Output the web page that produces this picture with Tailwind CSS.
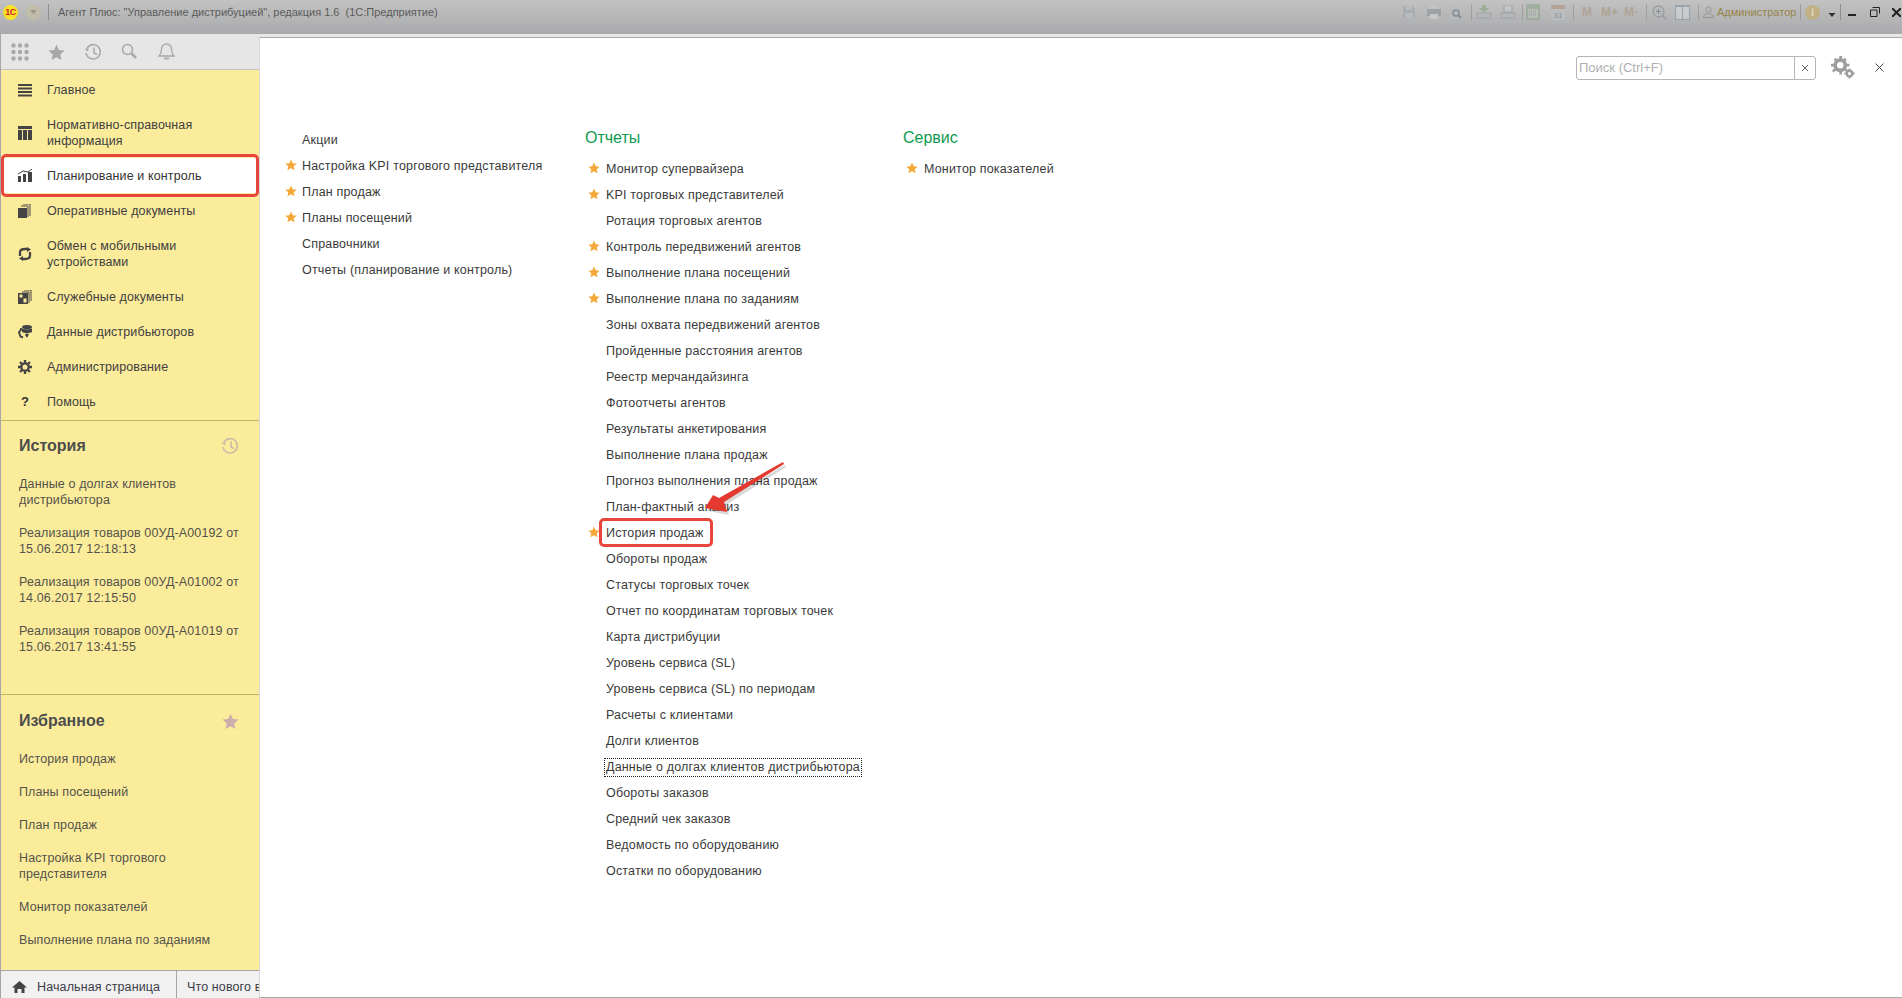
<!DOCTYPE html>
<html lang="ru">
<head>
<meta charset="utf-8">
<title>Агент Плюс</title>
<script src="https://cdn.jsdelivr.net/npm/@tailwindcss/browser@4"></script>
</head>
<body class="relative w-[1902px] h-[998px] overflow-hidden bg-white font-['Liberation_Sans',Arial,sans-serif] text-[13px] text-[#333]">

<!-- title bar -->
<header class="h-[34px] pb-[10px] flex items-center bg-gradient-to-b from-[#c2c2c2] to-[#a9aaac] text-[#5b5b5b]">
  <div class="w-[15px] h-[15px] ml-[3px] rounded-full bg-[#f7e02a] text-[#d6262a] text-[9px] tracking-[-0.5px] leading-[15px] font-bold text-center shrink-0">1С</div>
  <div class="w-[15px] h-[15px] ml-[8px] rounded-full bg-[#c2bdaa] flex items-center justify-center shrink-0"><svg width="7" height="4" viewBox="0 0 8 5"><path d="M0 0h8L4 5z" fill="#9a9484"/></svg></div>
  <div class="w-px h-[16px] ml-[7px] bg-[#8f8f8f]"></div>
  <div class="ml-[9px] text-[11px] whitespace-pre">Агент Плюс: "Управление дистрибуцией", редакция 1.6  (1С:Предприятие)</div>
  <div class="ml-auto flex items-center h-full pr-[1px]">
    <div class="flex items-center h-full opacity-60">
    <svg class="w-[14px] h-[14px] mr-[10px]" viewBox="0 0 14 14"><path d="M1 1h10l2 2v10H1z" fill="#9aa7b0"/><path d="M4 1h6v4H4zM3 8h8v5H3z" fill="#b9bdbf"/></svg>
    <svg class="w-[16px] h-[14px] mr-[7px]" viewBox="0 0 16 14"><path d="M4 0h8v4H4z" fill="#c8c8c8"/><path d="M1 4h14v7H1z" fill="#8b9398"/><path d="M4 9h8v5H4z" fill="#d4d4d4"/></svg>
    <svg class="w-[14px] h-[15px] mr-[8px]" viewBox="0 0 14 15"><path d="M1 0h8l3 3v11H1z" fill="#b7bec2"/><circle cx="7" cy="8" r="3" fill="none" stroke="#62707a" stroke-width="1.5"/><path d="M9 10l3 3" stroke="#62707a" stroke-width="2"/></svg>
    <div class="w-px h-[16px] mr-[4px] bg-[#8f8f8f]"></div>
    <svg class="w-[16px] h-[14px] mr-[8px]" viewBox="0 0 16 14"><path d="M6 0h4v3h3l-5 4-5-4h3z" fill="#88a37c"/><path d="M1 8h14v5H1z" fill="#b4babd" stroke="#8c9498"/></svg>
    <svg class="w-[16px] h-[14px] mr-[6px]" viewBox="0 0 16 14"><path d="M4 0h8v7H4z" fill="#c6c9ca" stroke="#8c9498"/><path d="M1 8h14v5H1z" fill="#b4babd" stroke="#8c9498"/></svg>
    <div class="w-px h-[16px] mr-[3px] bg-[#8f8f8f]"></div>
    <svg class="w-[14px] h-[16px] mr-[11px]" viewBox="0 0 14 16"><path d="M0 0h14v16H0z" fill="#8da58a"/><path d="M2 5h10v9H2z" fill="#bcc2bb"/><path d="M3 7h8M3 9h8M3 11h8" stroke="#80878a" stroke-dasharray="1 1"/></svg>
    <svg class="w-[14px] h-[16px] mr-[8px]" viewBox="0 0 14 16"><path d="M0 1h14v15H0z" fill="#bdc2c5"/><path d="M0 1h14v4H0z" fill="#b2907c"/><text x="2.5" y="14" font-size="8" fill="#6f777c" font-family="Liberation Sans">31</text></svg>
    <div class="w-px h-[16px] mr-[6px] bg-[#8f8f8f]"></div>
    <div class="flex text-[#a8967f] text-[12px] font-bold w-[66px] pl-[2px]"><span class="w-[19px]">M</span><span class="w-[23px]">M+</span><span>M-</span></div>
    <div class="w-px h-[16px] mr-[5px] bg-[#8f8f8f]"></div>
    <svg class="w-[15px] h-[15px] mr-[8px]" viewBox="0 0 15 15"><circle cx="6.5" cy="6.5" r="5.5" fill="#b5bbbe" stroke="#828a8e" stroke-width="1.3"/><path d="M4 6.5h5M6.500 4v5" stroke="#707070"/><path d="M10.500 10.500l4 4" stroke="#828a8e" stroke-width="1.5"/></svg>
    <svg class="w-[15px] h-[15px] mr-[8px]" viewBox="0 0 15 15"><path d="M0 0h15v15H0z" fill="#7f95a3"/><path d="M1 2h6v12H1zM8 2h6v12H8z" fill="#d5d7d8"/></svg>
    <div class="w-px h-[16px] mr-[4px] bg-[#8f8f8f]"></div>
    <svg class="w-[11px] h-[12px] mr-[3px]" viewBox="0 0 11 12"><circle cx="5.5" cy="3.5" r="2.6" fill="none" stroke="#85807a"/><path d="M.5 11.500c0-3 2-4 5-4s5 1 5 4z" fill="none" stroke="#85807a"/></svg>
    </div>
    <div class="text-[11px] text-[#97844a] w-[78px] mr-[5px] whitespace-nowrap">Администратор</div>
    <div class="w-px h-[16px] mr-[4px] bg-[#9a9a9a]"></div>
    <div class="w-[15px] h-[15px] rounded-full bg-[#c0b085] text-[#e0d8bc] text-[11px] leading-[15px] font-bold text-center mr-[8px]">i</div>
    <svg class="w-[8px] h-[4px] mr-[4px] mt-[6px]" viewBox="0 0 7 4"><path d="M0 0h7L3.500 4z" fill="#333"/></svg>
    <div class="w-px h-[16px] mr-[7px] bg-[#8f8f8f]"></div>
    <div class="w-[8px] h-[2px] bg-[#222] mr-[14px] mt-[5px]"></div>
    <svg class="w-[10px] h-[10px] mr-[12px]" viewBox="0 0 10 10"><path d="M2.500.5h7v6M.5 3h6.500v6.500H.5z" fill="none" stroke="#222"/></svg>
    <svg class="w-[9px] h-[9px]" viewBox="0 0 9 9"><path d="M0 0l9 9M9 0l-9 9" stroke="#222" stroke-width="2"/></svg>
  </div>
</header>

<div class="h-[964px] flex bg-[#e8e8e8]">
  <!-- sidebar -->
  <aside class="w-[259px] shrink-0 flex flex-col border-l border-[#a6a6a6]">
    <div class="h-[36px] pt-[8px] flex items-start bg-[#e6e6e6] border-b border-[#c2c2c2] shrink-0">
      <svg class="w-[18px] h-[18px] ml-[10px] mt-[1px]" viewBox="0 0 18 18" fill="#a8a8a8"><circle cx="2.500" cy="2.500" r="2.200"/><circle cx="9" cy="2.500" r="2.200"/><circle cx="15.500" cy="2.500" r="2.200"/><circle cx="2.500" cy="9" r="2.200"/><circle cx="9" cy="9" r="2.200"/><circle cx="15.500" cy="9" r="2.200"/><circle cx="2.500" cy="15.500" r="2.200"/><circle cx="9" cy="15.500" r="2.200"/><circle cx="15.500" cy="15.500" r="2.200"/></svg>
      <svg class="w-[17px] h-[17px] ml-[19px] mt-[2px]" viewBox="0 0 24 24" fill="#a8a8a8"><path d="M12 1l3.400 7.400 8 .9-6 5.400 1.700 8L12 18.600 4.900 22.700l1.700-8-6-5.400 8-.9z"/></svg>
      <svg class="w-[18px] h-[18px] ml-[19px] mt-[1px]" viewBox="0 0 18 18" fill="none" stroke="#a8a8a8" stroke-width="1.500"><path d="M3 5a7.200 7.200 0 1 1-1 5"/><path d="M.5 5.500h4.500l-1.500 3z" fill="#a8a8a8" stroke="none"/><path d="M10 4.500V10l3 1.500"/></svg>
      <svg class="w-[16px] h-[17px] ml-[19px] mt-[1px]" viewBox="0 0 16 17" fill="none" stroke="#a8a8a8"><circle cx="6.500" cy="6.500" r="5" stroke-width="1.500"/><path d="M10.500 10.500l4.500 4.500" stroke-width="2.500"/></svg>
      <svg class="w-[17px] h-[18px] ml-[21px]" viewBox="0 0 17 18" fill="none" stroke="#a8a8a8" stroke-width="1.300"><path d="M1 14h15c-2-2-2.500-4-2.500-7a5 5 0 0 0-10 0c0 3-.5 5-2.500 7z"/><path d="M6 16.500h5" stroke-width="1.800"/></svg>
    </div>

    <div class="flex-1 min-h-0 bg-[#fbec9c] flex flex-col text-[#404040]">
      <nav class="pt-[2px] border-b border-[#c0b26a] pb-[1px] shrink-0 tracking-[0.12px] leading-[16px] text-[12.500px]">
        <div class="h-[35px] flex items-center gap-[15px] pl-[17px]">
          <svg class="w-[14px] h-[14px] shrink-0" viewBox="0 0 14 14" fill="#444"><path d="M0 1h14v2H0zM0 4.500h14v2H0zM0 8h14v2H0zM0 11.500h14v2H0z"/></svg><span>Главное</span>
        </div>
        <div class="h-[51px] flex items-center gap-[15px] pl-[17px]">
          <svg class="w-[14px] h-[14px] shrink-0" viewBox="0 0 14 14" fill="#444"><path d="M0 0h14v3H0zM0 4h4v10H0zM5 4h4v10H5zM10 4h4v10h-4z"/></svg><span>Нормативно-справочная<br>информация</span>
        </div>
        <div class="h-[35px] flex items-center gap-[15px] pl-[17px] bg-white">
          <svg class="w-[14px] h-[14px] shrink-0" viewBox="0 0 14 14" fill="#444"><path d="M0 7h3v6H0zM5 5h3v8H5zM10 3h4v10h-4z"/><path d="M0 5l5-3 5 1 4-3" fill="none" stroke="#444"/></svg><span class="text-[#333]">Планирование и контроль</span>
        </div>
        <div class="h-[35px] flex items-center gap-[15px] pl-[17px]">
          <svg class="w-[14px] h-[14px] shrink-0" viewBox="0 0 14 14" fill="#444"><path d="M0 4h9v10H0z"/><path d="M10 13V2H3M12 12V0H5" fill="none" stroke="#444"/></svg><span>Оперативные документы</span>
        </div>
        <div class="h-[51px] flex items-center gap-[15px] pl-[17px]">
          <svg class="w-[14px] h-[14px] shrink-0" viewBox="0 0 14 14" fill="none" stroke="#444" stroke-width="2.300"><path d="M2 9V5.500C2 3 4 2 7 2h3"/><path d="M12 5v3.500C12 11 10 12 7 12H4"/><path d="M9 0l4 2.500L9 5zM5 9v5L1 11.500z" fill="#444" stroke="none"/></svg><span>Обмен с мобильными<br>устройствами</span>
        </div>
        <div class="h-[35px] flex items-center gap-[15px] pl-[17px]">
          <svg class="w-[14px] h-[14px] shrink-0" viewBox="0 0 14 14" fill="#444"><path d="M0 3h10v11H0z"/><path d="M1.500 4.500h3v3h-3zM5.500 8.500h3v4h-3z" fill="#fbec9c"/><path d="M11 13V2H4M13 11V0H6" fill="none" stroke="#444"/></svg><span>Служебные документы</span>
        </div>
        <div class="h-[35px] flex items-center gap-[15px] pl-[16px]">
          <svg class="w-[15px] h-[14px] shrink-0" viewBox="0 0 15 14" fill="#444"><ellipse cx="10" cy="2" rx="5" ry="2"/><path d="M5 3.500c2 1 8 1 10 0V7c-2 1.500-8 1.500-10 0z"/><path d="M9 8.500l3 .5-2 4-2-3z"/><path d="M4 3v1.500l-2 3 1.500 4 2.500 1" fill="none" stroke="#444" stroke-width="2"/></svg><span>Данные дистрибьюторов</span>
        </div>
        <div class="h-[35px] flex items-center gap-[15px] pl-[17px]">
          <svg class="w-[14px] h-[14px] shrink-0" viewBox="0 0 14 14"><circle cx="7" cy="7" r="3.700" fill="none" stroke="#444" stroke-width="2.300"/><path d="M7 0v3M7 11v3M0 7h3M11 7h3M2 2l2 2M10 10l2 2M12 2l-2 2M4 10l-2 2" stroke="#444" stroke-width="2.300"/></svg><span>Администрирование</span>
        </div>
        <div class="h-[35px] flex items-center gap-[15px] pl-[17px]">
          <span class="w-[14px] shrink-0 text-center font-bold text-[13px] text-[#333]">?</span><span>Помощь</span>
        </div>
      </nav>

      <section class="h-[274px] shrink-0 border-b border-[#c0b26a] pl-[18px] pr-[14px] pt-[13px] tracking-[0.12px] text-[#54524a] text-[12.500px] leading-[16px]">
        <div class="flex items-center justify-between h-[24px] mb-[18px]">
          <span class="text-[16px] font-bold text-[#4d4d4d] tracking-normal">История</span>
          <svg class="w-[18px] h-[18px] mr-[6px]" viewBox="0 0 18 18" fill="none" stroke="#c8b8a8" stroke-width="1.500"><path d="M3 5a7.200 7.200 0 1 1-1 5"/><path d="M.5 5.500h4.500l-1.500 3z" fill="#c8b8a8" stroke="none"/><path d="M10 4.500V10l3 1.500"/></svg>
        </div>
        <div class="mb-[17px]">Данные о долгах клиентов<br>дистрибьютора</div>
        <div class="mb-[17px]">Реализация товаров 00УД-А00192 от<br>15.06.2017 12:18:13</div>
        <div class="mb-[17px]">Реализация товаров 00УД-А01002 от<br>14.06.2017 12:15:50</div>
        <div>Реализация товаров 00УД-А01019 от<br>15.06.2017 13:41:55</div>
      </section>

      <section class="flex-1 pl-[18px] pr-[14px] pt-[14px] tracking-[0.12px] text-[#54524a] text-[12.500px] leading-[16px]">
        <div class="flex items-center justify-between h-[24px] mb-[18px]">
          <span class="text-[16px] font-bold text-[#4d4d4d] tracking-normal">Избранное</span>
          <svg class="w-[17px] h-[17px] mr-[6px]" viewBox="0 0 24 24" fill="#ccaead"><path d="M12 1l3.400 7.400 8 .9-6 5.400 1.700 8L12 18.600 4.900 22.700l1.700-8-6-5.400 8-.9z"/></svg>
        </div>
        <div class="mb-[17px]">История продаж</div>
        <div class="mb-[17px]">Планы посещений</div>
        <div class="mb-[17px]">План продаж</div>
        <div class="mb-[17px]">Настройка KPI торгового<br>представителя</div>
        <div class="mb-[17px]">Монитор показателей</div>
        <div>Выполнение плана по заданиям</div>
      </section>
    </div>

    <div class="h-[28px] pt-[5px] shrink-0 flex bg-[#f1f1f1] border-t border-[#a6a6a6] overflow-hidden whitespace-nowrap text-[12.500px] tracking-[0.12px] text-[#3c3c46]">
      <div class="w-[176px] shrink-0 flex items-center pl-[11px] border-r border-[#a6a6a6] mt-[-5px] pt-[5px]">
        <svg class="w-[15px] h-[12px] mr-[10px]" viewBox="0 0 15 12" fill="#444"><path d="M7.500 0L15 6.500h-2.500V12h-3V8h-4v4h-3V6.500H0z"/></svg><span>Начальная страница</span>
      </div>
      <div class="flex items-center pl-[10px]">Что нового в</div>
    </div>
  </aside>

  <!-- content -->
  <main class="flex-1 min-w-0 flex flex-col">
    <div class="h-[3px] bg-[#e8e8e8] shrink-0"></div>
    <div class="flex-1 bg-white border-t border-[#a8a8a8] border-l border-l-[#d8d8d8] border-b border-b-[#a8a8a8] text-[12.500px] tracking-[0.18px] leading-[16px]">
      <div class="h-[42px] flex items-end justify-end pr-[18px]">
        <div class="w-[240px] h-[24px] flex border border-[#b5b5b5] rounded-[3px] text-[#b0b0b0] text-[13px] tracking-normal leading-[22px]">
          <div class="flex-1 pl-[2px]">Поиск (Ctrl+F)</div>
          <div class="w-[21px] border-l border-[#b5b5b5] flex items-center justify-center"><svg class="w-[6px] h-[6px]" viewBox="0 0 7 7"><path d="M0 0l7 7M7 0L0 7" stroke="#444"/></svg></div>
        </div>
        <svg class="w-[26px] h-[24px] ml-[14px]" viewBox="0 0 28 26" fill="#9e9e9e"><circle cx="11" cy="10" r="5.500" fill="none" stroke="#9e9e9e" stroke-width="4"/><path d="M10 0h3v4h-3zM10 16h3v4h-3zM1 8.500h4v3H1zM17 8.500h4v3h-4zM4 4l2-2 3 3-2 2zM15 15l2-2 3 3-2 2zM18 4l-2-2-3 3 2 2zM7 15l-2-2-3 3 2 2z"/><circle cx="21" cy="19" r="3" fill="none" stroke="#9e9e9e" stroke-width="2.500"/><path d="M20 13.500h2v2h-2zM20 22.500h2v2h-2zM15.500 18h2v2h-2zM24.500 18h2v2h-2z"/></svg>
        <svg class="w-[9px] h-[9px] ml-[19px] mb-[8px]" viewBox="0 0 9 9"><path d="M.5.500l8 8M8.500.500l-8 8" stroke="#444"/></svg>
      </div>

      <div class="flex pt-[47px] text-[#3a3a3a]">
        <!-- column 1 -->
        <div class="w-[325px] pl-[25px] shrink-0 [&>div]:h-[26px] [&>div]:flex [&>div]:items-center [&>div]:pl-[17px] [&>div]:relative">
          <div>Акции</div>
          <div><svg class="absolute left-0 top-[6px] w-[12px] h-[12px]" viewBox="0 0 24 24" fill="#f5a83a"><path d="M12 1l3.400 7.400 8 .9-6 5.400 1.700 8L12 18.600 4.900 22.700l1.700-8-6-5.400 8-.9z"/></svg>Настройка KPI торгового представителя</div>
          <div><svg class="absolute left-0 top-[6px] w-[12px] h-[12px]" viewBox="0 0 24 24" fill="#f5a83a"><path d="M12 1l3.400 7.400 8 .9-6 5.400 1.700 8L12 18.600 4.900 22.700l1.700-8-6-5.400 8-.9z"/></svg>План продаж</div>
          <div><svg class="absolute left-0 top-[6px] w-[12px] h-[12px]" viewBox="0 0 24 24" fill="#f5a83a"><path d="M12 1l3.400 7.400 8 .9-6 5.400 1.700 8L12 18.600 4.900 22.700l1.700-8-6-5.400 8-.9z"/></svg>Планы посещений</div>
          <div>Справочники</div>
          <div>Отчеты (планирование и контроль)</div>
        </div>
        <!-- column 2 -->
        <div class="w-[318px] shrink-0">
          <div class="h-[26px] text-[16px] text-[#0f9a50] flex items-center tracking-normal mt-[-2px] mb-[5px]">Отчеты</div>
          <div class="[&>div]:h-[26px] [&>div]:flex [&>div]:items-center [&>div]:pl-[18px] [&>div]:ml-[3px] [&>div]:relative">
            <div><svg class="absolute left-[0px] top-[6px] w-[12px] h-[12px]" viewBox="0 0 24 24" fill="#f5a83a"><path d="M12 1l3.400 7.400 8 .9-6 5.400 1.700 8L12 18.600 4.900 22.700l1.700-8-6-5.400 8-.9z"/></svg>Монитор супервайзера</div>
            <div><svg class="absolute left-[0px] top-[6px] w-[12px] h-[12px]" viewBox="0 0 24 24" fill="#f5a83a"><path d="M12 1l3.400 7.400 8 .9-6 5.400 1.700 8L12 18.600 4.900 22.700l1.700-8-6-5.400 8-.9z"/></svg>KPI торговых представителей</div>
            <div>Ротация торговых агентов</div>
            <div><svg class="absolute left-[0px] top-[6px] w-[12px] h-[12px]" viewBox="0 0 24 24" fill="#f5a83a"><path d="M12 1l3.400 7.400 8 .9-6 5.400 1.700 8L12 18.600 4.900 22.700l1.700-8-6-5.400 8-.9z"/></svg>Контроль передвижений агентов</div>
            <div><svg class="absolute left-[0px] top-[6px] w-[12px] h-[12px]" viewBox="0 0 24 24" fill="#f5a83a"><path d="M12 1l3.400 7.400 8 .9-6 5.400 1.700 8L12 18.600 4.900 22.700l1.700-8-6-5.400 8-.9z"/></svg>Выполнение плана посещений</div>
            <div><svg class="absolute left-[0px] top-[6px] w-[12px] h-[12px]" viewBox="0 0 24 24" fill="#f5a83a"><path d="M12 1l3.400 7.400 8 .9-6 5.400 1.700 8L12 18.600 4.900 22.700l1.700-8-6-5.400 8-.9z"/></svg>Выполнение плана по заданиям</div>
            <div>Зоны охвата передвижений агентов</div>
            <div>Пройденные расстояния агентов</div>
            <div>Реестр мерчандайзинга</div>
            <div>Фотоотчеты агентов</div>
            <div>Результаты анкетирования</div>
            <div>Выполнение плана продаж</div>
            <div>Прогноз выполнения плана продаж</div>
            <div>План-фактный анализ</div>
            <div><svg class="absolute left-[0px] top-[6px] w-[12px] h-[12px]" viewBox="0 0 24 24" fill="#f5a83a"><path d="M12 1l3.400 7.400 8 .9-6 5.400 1.700 8L12 18.600 4.900 22.700l1.700-8-6-5.400 8-.9z"/></svg>История продаж</div>
            <div>Обороты продаж</div>
            <div>Статусы торговых точек</div>
            <div>Отчет по координатам торговых точек</div>
            <div>Карта дистрибуции</div>
            <div>Уровень сервиса (SL)</div>
            <div>Уровень сервиса (SL) по периодам</div>
            <div>Расчеты с клиентами</div>
            <div>Долги клиентов</div>
            <div><span class="outline outline-1 outline-dotted outline-[#222] leading-[17px] px-[1px] ml-[-1px]">Данные о долгах клиентов дистрибьютора</span></div>
            <div>Обороты заказов</div>
            <div>Средний чек заказов</div>
            <div>Ведомость по оборудованию</div>
            <div>Остатки по оборудованию</div>
          </div>
        </div>
        <!-- column 3 -->
        <div>
          <div class="h-[26px] text-[16px] text-[#0f9a50] flex items-center tracking-normal mt-[-2px] mb-[5px]">Сервис</div>
          <div class="h-[26px] flex items-center pl-[21px] relative"><svg class="absolute left-[3px] top-[6px] w-[12px] h-[12px]" viewBox="0 0 24 24" fill="#f5a83a"><path d="M12 1l3.400 7.400 8 .9-6 5.400 1.700 8L12 18.600 4.900 22.700l1.700-8-6-5.400 8-.9z"/></svg>Монитор показателей</div>
        </div>
      </div>
    </div>
  </main>
</div>

<!-- annotations lying over the screenshot -->
<div class="absolute left-[1px] top-[154px] w-[258px] h-[43px] border-[3px] border-[#e8453c] rounded-[5px]"></div>
<div class="absolute left-[599px] top-[518px] w-[114px] h-[29px] border-[3px] border-[#e8453c] rounded-[5px]"></div>
<svg class="absolute left-[695px] top-[455px]" width="100" height="60" viewBox="0 0 100 60"><path d="M88 7l1 2-60 38 3 10-22-4 8-13 6 3z" fill="#000" opacity=".15" transform="translate(2 3)"/><path d="M88 7l1 2-60 38 3 10-22-4 8-13 6 3z" fill="#e3392e"/></svg>

</body>
</html>
